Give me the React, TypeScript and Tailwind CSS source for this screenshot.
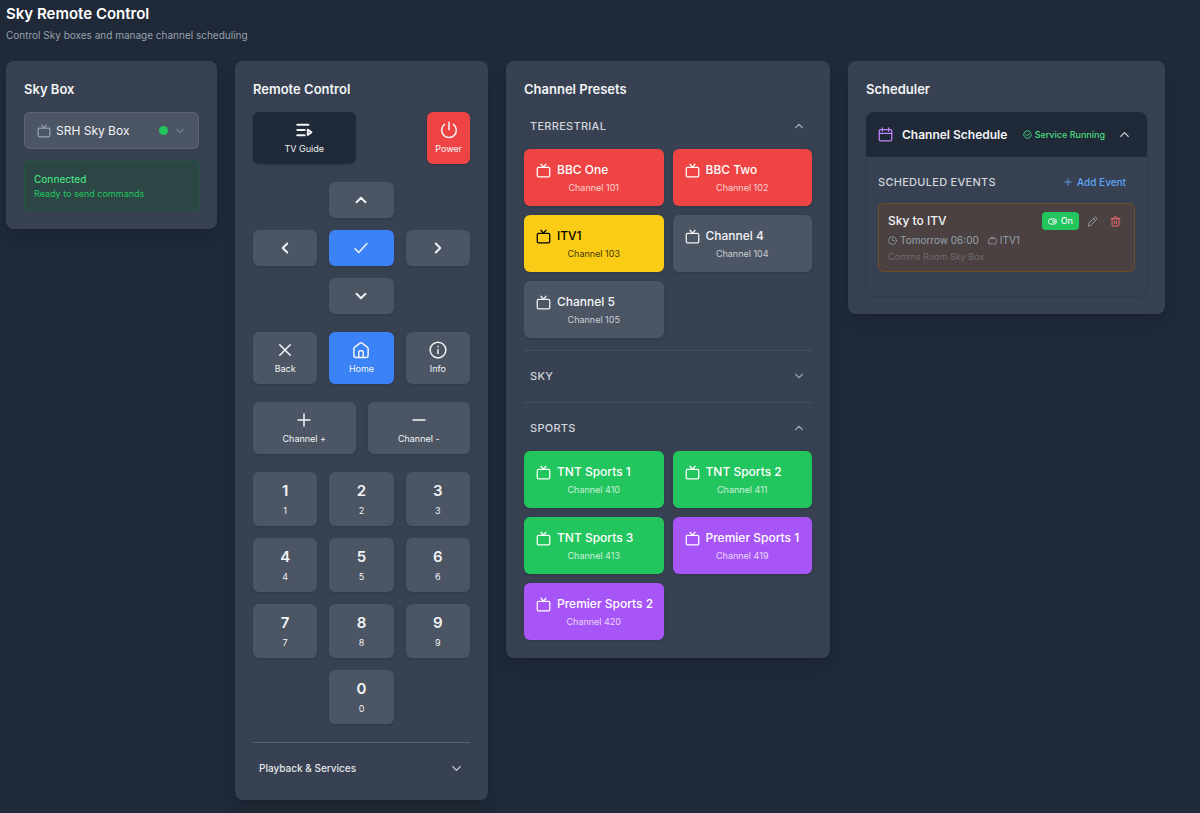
import React, { useState } from 'react'

type IconProps = { className?: string; strokeWidth?: number }

function Svg({ className = 'h-4 w-4', strokeWidth = 1.5, children }: IconProps & { children: React.ReactNode }) {
  return (
    <svg
      className={`shrink-0 ${className}`}
      viewBox="0 0 24 24"
      fill="none"
      stroke="currentColor"
      strokeWidth={strokeWidth}
      strokeLinecap="round"
      strokeLinejoin="round"
      aria-hidden="true"
    >
      {children}
    </svg>
  )
}

const TvIcon = (p: IconProps) => (
  <Svg {...p}>
    <path d="M2 20V9a2 2 0 0 1 2-2h16a2 2 0 0 1 2 2v11a2 2 0 0 1-2 2H4a2 2 0 0 1-2-2Z" />
    <path d="M8 2l4 4.500L16 2" />
  </Svg>
)
const ChannelIcon = (p: IconProps) => (
  <Svg {...p}>
    <path d="M2 19V9a2 2 0 0 1 2-2h16a2 2 0 0 1 2 2v10a2 2 0 0 1-2 2H4a2 2 0 0 1-2-2Z" />
    <path d="M8 7V5a2 2 0 0 1 2-2h4a2 2 0 0 1 2 2v2" />
  </Svg>
)
const GuideIcon = (p: IconProps) => (
  <Svg {...p}>
    <path d="M3 5h15M3 12h10M3 19h10" />
    <path d="M17 11.500v7l5-3.500Z" />
  </Svg>
)
const PowerIcon = (p: IconProps) => (
  <Svg {...p}>
    <path d="M12 1.500v10M6 4.500a9.800 9.800 0 1 0 12 0" />
  </Svg>
)
const HomeIcon = (p: IconProps) => (
  <Svg {...p}>
    <path d="M2.500 19v-8.500a3 3 0 0 1 1.200-2.400l6.500-5a3 3 0 0 1 3.600 0l6.500 5a3 3 0 0 1 1.200 2.400V19a3 3 0 0 1-3 3h-13a3 3 0 0 1-3-3Z" />
    <path d="M9 22v-7a2 2 0 0 1 2-2h2a2 2 0 0 1 2 2v7" />
  </Svg>
)
const InfoIcon = (p: IconProps) => (
  <Svg {...p}>
    <circle cx="12" cy="12" r="10.500" />
    <path d="M12 11.500V16.500M12 7.510l.01-.01" />
  </Svg>
)
const CloseIcon = (p: IconProps) => (
  <Svg {...p}>
    <path d="M5 5l14 14M19 5 5 19" />
  </Svg>
)
const PlusIcon = (p: IconProps) => (
  <Svg {...p}>
    <path d="M4 12h16M12 4v16" />
  </Svg>
)
const MinusIcon = (p: IconProps) => (
  <Svg {...p}>
    <path d="M4 12h16" />
  </Svg>
)
const CheckIcon = (p: IconProps) => (
  <Svg {...p}>
    <path d="m4 13 5 5L20 6" />
  </Svg>
)
const UpIcon = (p: IconProps) => (
  <Svg {...p}>
    <path d="m6 15 6-6 6 6" />
  </Svg>
)
const DownIcon = (p: IconProps) => (
  <Svg {...p}>
    <path d="m6 9 6 6 6-6" />
  </Svg>
)
const LeftIcon = (p: IconProps) => (
  <Svg {...p}>
    <path d="m15 6-6 6 6 6" />
  </Svg>
)
const RightIcon = (p: IconProps) => (
  <Svg {...p}>
    <path d="m9 6 6 6-6 6" />
  </Svg>
)
const CalendarIcon = (p: IconProps) => (
  <Svg {...p}>
    <rect x="2" y="4" width="20" height="18" rx="2" />
    <path d="M2 10h20M7 1.500v5M17 1.500v5" />
  </Svg>
)
const CheckCircleIcon = (p: IconProps) => (
  <Svg {...p}>
    <path d="M17 3.300A10 10 0 1 0 22 12M7.500 11.500l4 4L21.500 5.500" />
  </Svg>
)
const ClockIcon = (p: IconProps) => (
  <Svg {...p}>
    <path d="M12 6v6h5" />
    <circle cx="12" cy="12" r="10.500" />
  </Svg>
)
const ToggleIcon = (p: IconProps) => (
  <Svg {...p}>
    <rect x="1" y="5" width="22" height="14" rx="7" />
    <circle cx="15.500" cy="12" r="3.500" />
  </Svg>
)
const PencilIcon = (p: IconProps) => (
  <Svg {...p}>
    <path d="m14.400 5.700 3.900 3.900M2.500 21.500l1.500-6L16.800 3a2 2 0 0 1 2.800 0l1.400 1.400a2 2 0 0 1 0 2.800L8.700 20Z" />
  </Svg>
)
const TrashIcon = (p: IconProps) => (
  <Svg {...p}>
    <path d="M2 6h20M4.500 6v14a2 2 0 0 0 2 2h11a2 2 0 0 0 2-2V6M8 6V4a2 2 0 0 1 2-2h4a2 2 0 0 1 2 2v2M10 11v6M14 11v6" />
  </Svg>
)

const cardClass = 'rounded-lg bg-[#374151] p-[18px] shadow-lg'
const keyClass = 'flex items-center justify-center rounded-md shadow-sm'
const greyKey = 'bg-[#4b5563] hover:bg-[#6b7280]'

function Card({ title, children }: { title: string; children: React.ReactNode }) {
  return (
    <section className={cardClass}>
      <h2 className="mb-3 text-[13px] leading-[21px] font-semibold">{title}</h2>
      {children}
    </section>
  )
}

function LabelKey({ icon, label, className }: { icon: React.ReactNode; label: string; className: string }) {
  return (
    <button className={`${keyClass} flex-col gap-1 px-2 py-[9px] ${className}`}>
      {icon}
      <span className="text-[9px] leading-3">{label}</span>
    </button>
  )
}

function ArrowKey({ label, className = '', children }: { label: string; className?: string; children: React.ReactNode }) {
  return (
    <button aria-label={label} className={`${keyClass} h-9 ${className}`}>
      {children}
    </button>
  )
}

type Channel = { name: string; number: number; color: string }

const groups: { name: string; channels: Channel[] }[] = [
  {
    name: 'Terrestrial',
    channels: [
      { name: 'BBC One', number: 101, color: 'bg-[#ef4444] text-white' },
      { name: 'BBC Two', number: 102, color: 'bg-[#ef4444] text-white' },
      { name: 'ITV1', number: 103, color: 'bg-[#facc15] text-black' },
      { name: 'Channel 4', number: 104, color: 'bg-[#4b5563] text-gray-100' },
      { name: 'Channel 5', number: 105, color: 'bg-[#4b5563] text-gray-100' },
    ],
  },
  { name: 'Sky', channels: [] },
  {
    name: 'Sports',
    channels: [
      { name: 'TNT Sports 1', number: 410, color: 'bg-[#22c55e] text-white' },
      { name: 'TNT Sports 2', number: 411, color: 'bg-[#22c55e] text-white' },
      { name: 'TNT Sports 3', number: 413, color: 'bg-[#22c55e] text-white' },
      { name: 'Premier Sports 1', number: 419, color: 'bg-[#a855f7] text-white' },
      { name: 'Premier Sports 2', number: 420, color: 'bg-[#a855f7] text-white' },
    ],
  },
]

function BoxSelector() {
  return (
    <Card title="Sky Box">
      <label className="mb-3 flex h-[37px] items-center rounded-md border border-[#6b7280]/60 bg-[#4b5563] px-3">
        <TvIcon className="h-[14px] w-[14px] text-gray-400" strokeWidth={2} />
        <select aria-label="Sky box" className="ml-[5px] min-w-0 flex-1 appearance-none bg-transparent text-xs text-gray-100 outline-none">
          <option>SRH Sky Box</option>
        </select>
        <span className="mr-[6px] h-[9px] w-[9px] rounded-full bg-[#22c55e]" />
        <DownIcon className="h-3 w-3 text-gray-400" strokeWidth={2} />
      </label>
      <div className="rounded-sm border border-[#166534]/70 bg-[#14532d]/30 p-[9px]">
        <p className="text-[10px] leading-4 font-medium text-[#4ade80]">Connected</p>
        <p className="text-[9px] leading-[14px] text-[#22c55e]">Ready to send commands</p>
      </div>
    </Card>
  )
}

function Remote() {
  return (
    <Card title="Remote Control">
      <div className="space-y-[18px]">
        <div className="grid grid-cols-2 gap-3">
          <LabelKey icon={<GuideIcon className="h-[18px] w-[18px]" strokeWidth={2.5} />} label="TV Guide" className="bg-[#1f2937]" />
          <LabelKey icon={<PowerIcon className="h-[18px] w-[18px]" strokeWidth={2} />} label="Power" className="justify-self-end bg-[#ef4444]" />
        </div>

        {/* Navigation pad */}
        <div className="grid grid-cols-3 gap-3">
          <ArrowKey label="Up" className={`col-start-2 ${greyKey}`}>
            <UpIcon className="h-[18px] w-[18px]" strokeWidth={2.5} />
          </ArrowKey>
          <ArrowKey label="Left" className={`col-start-1 ${greyKey}`}>
            <LeftIcon className="h-[18px] w-[18px]" strokeWidth={2.5} />
          </ArrowKey>
          <ArrowKey label="Select" className="bg-[#3b82f6]">
            <CheckIcon className="h-[18px] w-[18px]" strokeWidth={2} />
          </ArrowKey>
          <ArrowKey label="Right" className={greyKey}>
            <RightIcon className="h-[18px] w-[18px]" strokeWidth={2.5} />
          </ArrowKey>
          <ArrowKey label="Down" className={`col-start-2 ${greyKey}`}>
            <DownIcon className="h-[18px] w-[18px]" strokeWidth={2.5} />
          </ArrowKey>
        </div>

        <div className="grid grid-cols-3 gap-3">
          <LabelKey icon={<CloseIcon className="h-[18px] w-[18px]" strokeWidth={2} />} label="Back" className={greyKey} />
          <LabelKey icon={<HomeIcon className="h-[18px] w-[18px]" strokeWidth={2} />} label="Home" className="bg-[#3b82f6]" />
          <LabelKey icon={<InfoIcon className="h-[18px] w-[18px]" strokeWidth={2} />} label="Info" className={greyKey} />
        </div>

        <div className="grid grid-cols-2 gap-3">
          <LabelKey icon={<PlusIcon className="h-[18px] w-[18px]" strokeWidth={2} />} label="Channel +" className={greyKey} />
          <LabelKey icon={<MinusIcon className="h-[18px] w-[18px]" strokeWidth={2} />} label="Channel -" className={greyKey} />
        </div>

        {/* Number pad */}
        <div className="grid grid-cols-3 gap-3">
          {['1', '2', '3', '4', '5', '6', '7', '8', '9', '0'].map((n) => (
            <LabelKey
              key={n}
              icon={<span className="text-[15px] leading-5 font-semibold">{n}</span>}
              label={n}
              className={n === '0' ? `col-start-2 ${greyKey}` : greyKey}
            />
          ))}
        </div>

        <div className="border-t border-[#566072] pt-3">
          <button className="flex h-[27px] w-full items-center justify-between px-[6px] text-[10px] font-medium text-gray-200">
            <span>Playback &amp; Services</span>
            <DownIcon className="h-[15px] w-[15px] text-gray-300" strokeWidth={2} />
          </button>
        </div>
      </div>
    </Card>
  )
}

function Presets() {
  const [open, setOpen] = useState<string[]>(['Terrestrial', 'Sports'])

  const toggle = (name: string) => {
    setOpen((prev) => (prev.includes(name) ? prev.filter((n) => n !== name) : [...prev, name]))
  }

  return (
    <Card title="Channel Presets">
      <div className="space-y-[11px]">
        {groups.map((group) => {
          const isOpen = open.includes(group.name)
          return (
            <div key={group.name} className="border-b border-[#4b5563]/70 pb-3 last:border-b-0 last:pb-0">
              <button
                onClick={() => toggle(group.name)}
                aria-expanded={isOpen}
                className="flex h-7 w-full items-center justify-between px-[6px] text-[11px] font-medium tracking-wide text-gray-300 uppercase"
              >
                <span>{group.name}</span>
                {isOpen ? (
                  <UpIcon className="h-[14px] w-[14px] text-gray-400" strokeWidth={2} />
                ) : (
                  <DownIcon className="h-[14px] w-[14px] text-gray-400" strokeWidth={2} />
                )}
              </button>
              {isOpen && (
                <div className="mt-[9px] grid grid-cols-2 gap-[9px]">
                  {group.channels.map((channel) => (
                    <button key={channel.number} className={`rounded-md p-3 shadow-sm ${channel.color}`}>
                      <span className="flex items-center gap-[6px]">
                        <TvIcon className="h-[15px] w-[15px]" strokeWidth={2} />
                        <span className="text-xs leading-[18px] font-medium whitespace-nowrap">{channel.name}</span>
                      </span>
                      <span className="mt-[3px] block text-[9px] leading-3 opacity-75">Channel {channel.number}</span>
                    </button>
                  ))}
                </div>
              )}
            </div>
          )
        })}
      </div>
    </Card>
  )
}

function Scheduler() {
  const [expanded, setExpanded] = useState(true)
  const [enabled, setEnabled] = useState(true)

  return (
    <Card title="Scheduler">
      <div className="overflow-hidden rounded-lg shadow-sm">
        <button
          onClick={() => setExpanded(!expanded)}
          aria-expanded={expanded}
          className="flex h-[45px] w-full items-center bg-[#1f2937] px-3"
        >
          <CalendarIcon className="h-[15px] w-[15px] text-[#c084fc]" strokeWidth={2} />
          <span className="ml-[9px] text-xs font-semibold">Channel Schedule</span>
          <span className="ml-auto flex items-center gap-[3px] text-[9px] font-medium text-[#4ade80]">
            <CheckCircleIcon className="h-[9px] w-[9px]" strokeWidth={2.5} />
            Service Running
          </span>
          <UpIcon className="mr-[3px] ml-3 h-[15px] w-[15px] text-gray-300" strokeWidth={2} />
        </button>

        {expanded && (
          <div className="px-3 pt-3 pb-6">
            <div className="mb-2 flex h-[26px] items-center justify-between">
              <h3 className="text-[11px] font-medium tracking-wide text-gray-300 uppercase">Scheduled Events</h3>
              <button className="flex items-center gap-1 px-[9px] text-[10px] font-medium text-[#60a5fa]">
                <PlusIcon className="h-[10px] w-[10px]" strokeWidth={2} />
                Add Event
              </button>
            </div>

            <div className="rounded-md border border-[#78501f]/80 bg-[#4a4140] px-[9px] py-2">
              <div className="flex items-center justify-between">
                <h4 className="text-xs leading-[18px] font-medium">Sky to ITV</h4>
                <div className="flex items-center">
                  <button
                    onClick={() => setEnabled(!enabled)}
                    className="flex h-[18px] items-center gap-1 rounded-sm bg-[#22c55e] px-[6px] text-[9px] font-medium"
                  >
                    <ToggleIcon className="h-[9px] w-[9px]" strokeWidth={2.5} />
                    {enabled ? 'On' : 'Off'}
                  </button>
                  <button aria-label="Edit event" className="ml-2 text-gray-400">
                    <PencilIcon className="h-[11px] w-[11px]" strokeWidth={2} />
                  </button>
                  <button aria-label="Delete event" className="mr-1 ml-3 text-[#f87171]">
                    <TrashIcon className="h-[11px] w-[11px]" strokeWidth={2} />
                  </button>
                </div>
              </div>
              <div className="mt-[3px] flex items-center gap-[9px] text-[10px] leading-[15px] text-gray-400">
                <span className="flex items-center gap-[3px]">
                  <ClockIcon className="h-[9px] w-[9px]" strokeWidth={2} />
                  Tomorrow 06:00
                </span>
                <span className="flex items-center gap-[3px]">
                  <ChannelIcon className="h-[9px] w-[9px]" strokeWidth={2} />
                  ITV1
                </span>
              </div>
              <p className="mt-[3px] text-[9px] leading-3 text-[#6b6b72]">Comms Room Sky Box</p>
            </div>
          </div>
        )}
      </div>
    </Card>
  )
}

export default function App() {
  return (
    <div className="min-h-screen bg-[#1f2937] pt-1 pr-[35px] pb-3 pl-[6px] font-['Inter',sans-serif] text-gray-100">
      <header className="mb-[18px]">
        <h1 className="text-[15px] leading-5 font-semibold text-white">Sky Remote Control</h1>
        <p className="mt-[3px] text-[10px] leading-4 text-gray-400">Control Sky boxes and manage channel scheduling</p>
      </header>
      <main className="grid grid-cols-[211fr_253fr_324fr_317fr] items-start gap-[18px]">
        <BoxSelector />
        <Remote />
        <Presets />
        <Scheduler />
      </main>
    </div>
  )
}
